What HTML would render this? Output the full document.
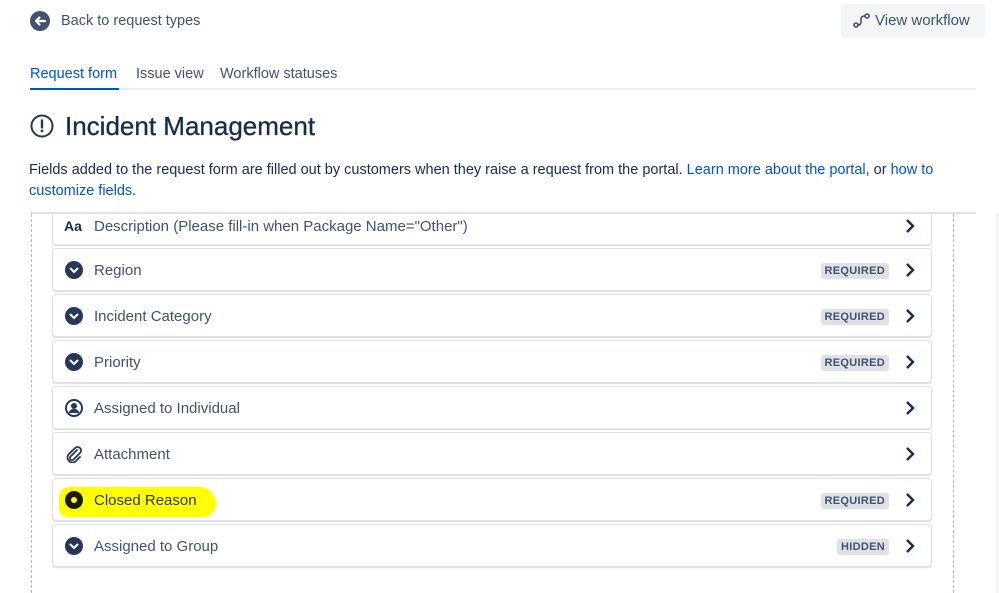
<!DOCTYPE html>
<html><head><style>
*{box-sizing:border-box;margin:0;padding:0}
body{width:999px;height:593px;overflow:hidden;background:#fff;font-family:"Liberation Sans",sans-serif;color:#172b4d;position:relative}
.abs{position:absolute}
.clip{position:absolute;left:0;top:214px;width:999px;height:379px;overflow:hidden}
.row{position:absolute;left:52px;width:880px;height:43px;border:1px solid #dfe1e6;border-radius:4px;background:#fff;box-shadow:0 1px 1px rgba(9,30,66,.15)}
.row .lbl{position:absolute;left:41px;top:13px;font-size:15px;color:#42526e}
.row .ic{position:absolute;left:12px;top:12px;width:18px;height:18px}
.badge{position:absolute;right:42px;top:14px;background:#dfe1e6;color:#42526e;font-size:11px;font-weight:bold;padding:2px 4px;border-radius:3px;letter-spacing:.3px}
.chev{position:absolute;right:16px;top:13px;width:10px;height:16px}
a{color:#0052cc;text-decoration:none}
</style></head><body>
<svg class="abs" style="left:29px;top:10px" width="22" height="22" viewBox="0 0 22 22"><circle cx="11" cy="11" r="10" fill="#42526e"/><path d="M16 11H7M10.5 7.5L7 11l3.5 3.5" stroke="#fff" stroke-width="2.2" fill="none" stroke-linecap="round" stroke-linejoin="round"/></svg>
<div class="abs" style="left:61px;top:13px;font-size:14.5px;color:#42526e">Back to request types</div>
<div class="abs" style="left:841px;top:4px;width:144px;height:33px;background:#f4f5f7;border-radius:3px"></div>
<svg class="abs" style="left:853px;top:13px" width="18" height="16" viewBox="0 0 18 16"><circle cx="3" cy="12" r="2" fill="none" stroke="#42526e" stroke-width="1.6"/><circle cx="14" cy="3" r="2" fill="none" stroke="#42526e" stroke-width="1.6"/><path d="M5 12c3 0 3-2 3-5s1-4 4-4" fill="none" stroke="#42526e" stroke-width="1.6"/></svg>
<div class="abs" style="left:875px;top:12px;font-size:15px;color:#42526e">View workflow</div>
<div class="abs" style="left:30px;top:66px;font-size:14.5px;color:#0052cc">Request form</div>
<div class="abs" style="left:136px;top:66px;font-size:14.5px;color:#42526e">Issue view</div>
<div class="abs" style="left:220px;top:66px;font-size:14.5px;color:#42526e">Workflow statuses</div>
<div class="abs" style="left:30px;top:88px;width:946px;height:2px;background:#ebecf0"></div>
<div class="abs" style="left:30px;top:88px;width:89px;height:2px;background:#0052cc"></div>
<svg class="abs" style="left:30px;top:114px" width="24" height="24" viewBox="0 0 24 24"><circle cx="12" cy="12" r="10.5" fill="none" stroke="#253858" stroke-width="2"/><path d="M12 6.5v7" stroke="#253858" stroke-width="2.4" stroke-linecap="round"/><circle cx="12" cy="17" r="1.4" fill="#253858"/></svg>
<div class="abs" style="left:65px;top:111px;font-size:26px;color:#172b4d;-webkit-text-stroke:0.3px #172b4d">Incident Management</div>
<div class="abs" style="left:29px;top:160px;width:940px;font-size:14.5px;line-height:21px;color:#172b4d">Fields added to the request form are filled out by customers when they raise a request from the portal. <a>Learn more about the portal</a>, or <a>how to customize fields</a>.</div>
<div class="abs" style="left:31px;top:214px;width:0;height:379px;border-left:1px dashed #b3bac5"></div>
<div class="abs" style="left:953px;top:214px;width:0;height:379px;border-left:1px dashed #b3bac5"></div>
<div class="abs" style="left:30px;top:212px;width:946px;height:2px;background:#dfe1e6;z-index:2"></div>
<div class="abs" style="left:996px;top:213px;width:3px;height:380px;background:#f4f5f7"></div>

<div class="clip">
<div class="row" style="top:-12px"><div class="abs" style="left:11px;top:15px;font-size:14px;font-weight:bold;color:#172b4d">Aa</div><div class="lbl" style="top:15px">Description (Please fill-in when Package Name="Other")</div><svg class="chev" style="top:15px" viewBox="0 0 10 16"><path d="M2 2l6 6-6 6" stroke="#172b4d" stroke-width="2.4" fill="none"/></svg></div>

<div class="row" style="top:34px"><svg class="ic" viewBox="0 0 18 18"><circle cx="9" cy="9" r="9" fill="#253858"/><path d="M5.5 7.5L9 11l3.5-3.5" stroke="#fff" stroke-width="2" fill="none" stroke-linecap="round"/></svg><div class="lbl">Region</div><div class="badge">REQUIRED</div><svg class="chev" viewBox="0 0 10 16"><path d="M2 2l6 6-6 6" stroke="#172b4d" stroke-width="2.4" fill="none"/></svg></div>

<div class="row" style="top:80px"><svg class="ic" viewBox="0 0 18 18"><circle cx="9" cy="9" r="9" fill="#253858"/><path d="M5.5 7.5L9 11l3.5-3.5" stroke="#fff" stroke-width="2" fill="none" stroke-linecap="round"/></svg><div class="lbl">Incident Category</div><div class="badge">REQUIRED</div><svg class="chev" viewBox="0 0 10 16"><path d="M2 2l6 6-6 6" stroke="#172b4d" stroke-width="2.4" fill="none"/></svg></div>

<div class="row" style="top:126px"><svg class="ic" viewBox="0 0 18 18"><circle cx="9" cy="9" r="9" fill="#253858"/><path d="M5.5 7.5L9 11l3.5-3.5" stroke="#fff" stroke-width="2" fill="none" stroke-linecap="round"/></svg><div class="lbl">Priority</div><div class="badge">REQUIRED</div><svg class="chev" viewBox="0 0 10 16"><path d="M2 2l6 6-6 6" stroke="#172b4d" stroke-width="2.4" fill="none"/></svg></div>

<div class="row" style="top:172px"><svg class="ic" viewBox="0 0 18 18"><circle cx="9" cy="9" r="8" fill="none" stroke="#253858" stroke-width="2"/><circle cx="9" cy="7" r="3" fill="#253858"/><path d="M3.5 14c1-3 3-4 5.5-4s4.5 1 5.5 4z" fill="#253858"/></svg><div class="lbl">Assigned to Individual</div><svg class="chev" viewBox="0 0 10 16"><path d="M2 2l6 6-6 6" stroke="#172b4d" stroke-width="2.4" fill="none"/></svg></div>

<div class="row" style="top:218px"><svg class="ic" viewBox="0 0 18 18"><path d="M12 5l-6.5 6.5a2 2 0 0 0 3 3L15 8a3.5 3.5 0 0 0-5-5L3.5 9.5a5 5 0 0 0 7 7L15 12" fill="none" stroke="#253858" stroke-width="1.8" stroke-linecap="round"/></svg><div class="lbl">Attachment</div><svg class="chev" viewBox="0 0 10 16"><path d="M2 2l6 6-6 6" stroke="#172b4d" stroke-width="2.4" fill="none"/></svg></div>

<div class="row" style="top:264px"><div class="abs" style="left:6px;top:8px;width:157px;height:30px;background:#ffff00;border-radius:12px 20px 16px 10px"></div><svg class="ic" viewBox="0 0 18 18"><circle cx="9" cy="9" r="9" fill="#1a1a10"/><circle cx="9" cy="9" r="3" fill="#ffff00"/></svg><div class="lbl" style="color:#33331a">Closed Reason</div><div class="badge">REQUIRED</div><svg class="chev" viewBox="0 0 10 16"><path d="M2 2l6 6-6 6" stroke="#172b4d" stroke-width="2.4" fill="none"/></svg></div>

<div class="row" style="top:310px"><svg class="ic" viewBox="0 0 18 18"><circle cx="9" cy="9" r="9" fill="#253858"/><path d="M5.5 7.5L9 11l3.5-3.5" stroke="#fff" stroke-width="2" fill="none" stroke-linecap="round"/></svg><div class="lbl">Assigned to Group</div><div class="badge">HIDDEN</div><svg class="chev" viewBox="0 0 10 16"><path d="M2 2l6 6-6 6" stroke="#172b4d" stroke-width="2.4" fill="none"/></svg></div>
</div>
</body></html>
